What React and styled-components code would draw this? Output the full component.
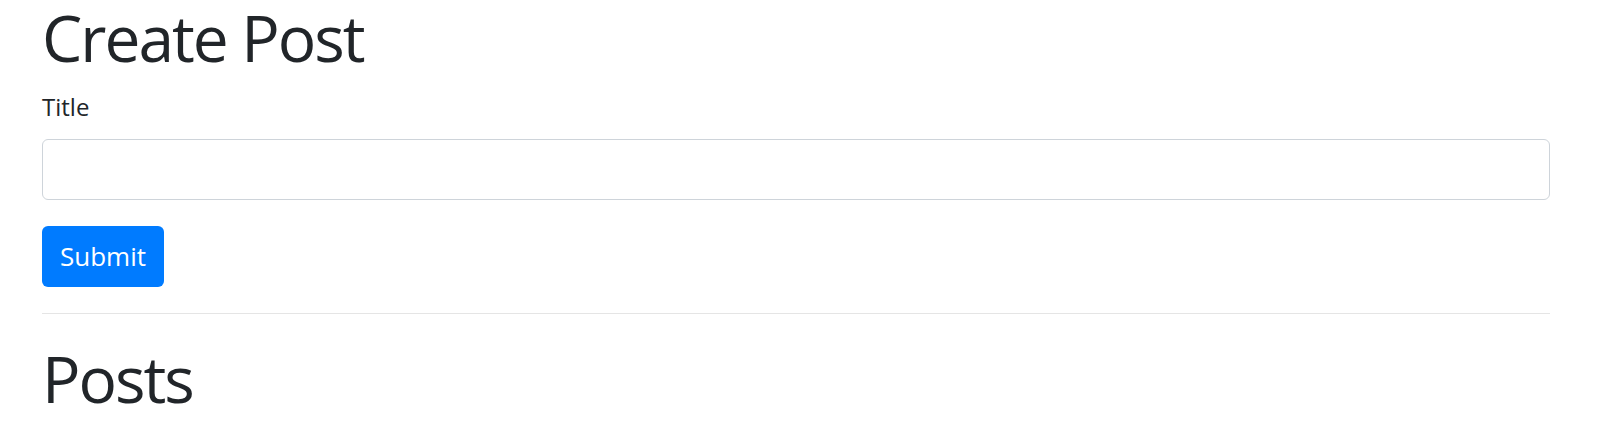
import React, { useState } from "react";
import styled, { createGlobalStyle } from "styled-components";

const GlobalStyle = createGlobalStyle`
  body {
    margin: 0;
    background: #fff;
    color: #212529;
    font-family: "Open Sans", "Noto Sans", sans-serif;
  }
  * { box-sizing: border-box; }
`;

const Container = styled.div`
  padding: 0 48px 0 42px;
`;

const Heading = styled.h1`
  margin: ${(p) => p.$top || 0}px 0 0;
  font-size: 64px;
  font-weight: 400;
  letter-spacing: -2px;
  line-height: 1.2;
`;

const Form = styled.form`
  display: flex;
  flex-direction: column;
  align-items: flex-start;
`;

const Label = styled.label`
  margin-top: 12px;
  font-size: 24px;
  line-height: 36px;
`;

const Input = styled.input`
  width: 100%;
  height: 61px;
  margin-top: 14px;
  padding: 0 18px;
  border: 1px solid #ced4da;
  border-radius: 6px;
  font-family: inherit;
  font-size: 24px;
  color: #495057;
  outline: none;
`;

const Button = styled.button`
  margin-top: 26px;
  height: 61px;
  padding: 0 18px;
  border: none;
  border-radius: 6px;
  background-color: #007bff;
  color: #fff;
  font-family: inherit;
  font-size: 26px;
  cursor: pointer;
`;

const Divider = styled.hr`
  margin: 26px 0 0;
  border: 0;
  border-top: 1px solid rgba(0, 0, 0, 0.1);
`;

const App = () => {
  const [title, setTitle] = useState("");

  return (
    <>
      <GlobalStyle />
      <Container>
        <Heading>Create Post</Heading>
        <Form onSubmit={(e) => e.preventDefault()}>
          <Label htmlFor="title">Title</Label>
          <Input id="title" value={title} onChange={(e) => setTitle(e.target.value)} />
          <Button type="submit">Submit</Button>
        </Form>
        <Divider />
        <Heading $top={27}>Posts</Heading>
      </Container>
    </>
  );
};

export default App;
